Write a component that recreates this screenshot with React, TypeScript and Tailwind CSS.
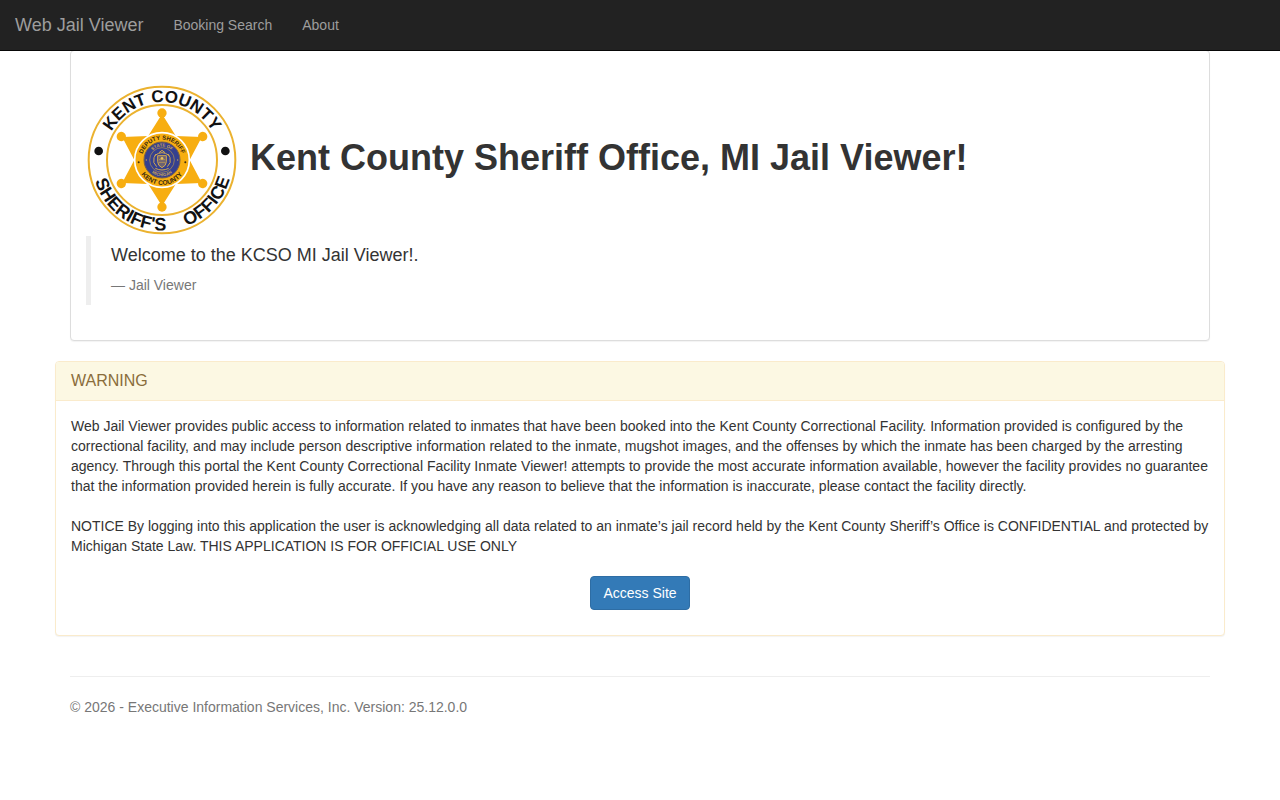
import type { ReactNode } from 'react'

const navLinks = [
  { label: 'Booking Search', href: '#search' },
  { label: 'About', href: '#about' }
]

const starAngles = [0, 60, 120, 180, 240, 300]

function starPoints(outer: number, inner: number) {
  const points: string[] = []
  for (let i = 0; i < 12; i++) {
    const r = i % 2 === 0 ? outer : inner
    const a = (i * Math.PI) / 6
    points.push(`${(225 + r * Math.sin(a)).toFixed(1)},${(225 - r * Math.cos(a)).toFixed(1)}`)
  }
  return points.join(' ')
}

function SheriffSeal() {
  return (
    <svg
      viewBox="0 0 450 450"
      className="w-[150px] h-[150px] shrink-0 font-['Liberation_Sans',Arial,sans-serif]"
      role="img"
      aria-label="Kent County Sheriff's Office"
    >
      <defs>
        <path id="ring-top" d="M51 225 A174 174 0 0 1 399 225" />
        <path id="ring-bottom" d="M14 225 A211 211 0 0 0 436 225" />
        <path id="badge-top" d="M164 225 A61 61 0 0 1 286 225" />
        <path id="badge-bottom" d="M150 225 A75 75 0 0 0 300 225" />
        <path id="state-top" d="M185 225 A40 40 0 0 1 265 225" />
        <path id="state-bottom" d="M176 225 A49 49 0 0 0 274 225" />
      </defs>

      <circle cx="225" cy="225" r="220" fill="#fff" stroke="#ebb22f" strokeWidth="6" />
      <circle cx="225" cy="225" r="165" fill="#fff" stroke="#ebb22f" strokeWidth="6" />

      <g fill="#111" fontWeight="bold" textAnchor="middle">
        <text fontSize="51">
          <textPath href="#ring-top" startOffset="50%">KENT COUNTY</textPath>
        </text>
        <text fontSize="54">
          <textPath href="#ring-bottom" startOffset="204">SHERIFF'S</textPath>
        </text>
        <text fontSize="54">
          <textPath href="#ring-bottom" startOffset="506">OFFICE</textPath>
        </text>
      </g>
      <circle cx="35" cy="198" r="13" fill="#111" />
      <circle cx="415" cy="198" r="13" fill="#111" />

      <polygon points={starPoints(138, 83)} fill="#f7ae11" />
      {starAngles.map(angle => (
        <circle key={angle} cx="225" cy="84" r="14" fill="#f7ae11" transform={`rotate(${angle} 225 225)`} />
      ))}

      <circle cx="225" cy="225" r="82" fill="#f7ae11" stroke="#fff" strokeWidth="5" />
      <g fill="#3a2a10" fontWeight="bold" textAnchor="middle">
        <text fontSize="18">
          <textPath href="#badge-top" startOffset="50%">DEPUTY SHERIFF</textPath>
        </text>
        <text fontSize="20">
          <textPath href="#badge-bottom" startOffset="50%">KENT COUNTY</textPath>
        </text>
      </g>
      <circle cx="155" cy="232" r="3" fill="#3a2a10" />
      <circle cx="295" cy="232" r="3" fill="#3a2a10" />

      <circle cx="225" cy="225" r="54" fill="#35408f" stroke="#7a6248" strokeWidth="3" />
      <circle cx="225" cy="225" r="37" fill="none" stroke="#b8954f" strokeWidth="2" />
      <g fill="#c9a35a" fontWeight="bold" textAnchor="middle" fontSize="13">
        <text>
          <textPath href="#state-top" startOffset="50%">STATE OF</textPath>
        </text>
        <text>
          <textPath href="#state-bottom" startOffset="50%">MICHIGAN</textPath>
        </text>
      </g>
      <circle cx="178" cy="225" r="2" fill="#c9a35a" />
      <circle cx="272" cy="225" r="2" fill="#c9a35a" />

      {/* coat of arms */}
      <g stroke="#d2a850" strokeWidth="3" fill="none">
        <path d="M212 212 H238 V230 Q238 242 225 248 Q212 242 212 230 Z" fill="#6d6272" />
        <path d="M209 245 Q196 234 201 218 L207 207 M241 245 Q254 234 249 218 L243 207" />
        <path d="M203 212 Q225 194 247 212 M216 203 L225 196 L234 203" />
        <path d="M205 250 Q225 260 245 250" />
        <path d="M216 224 H234 M216 232 H234" strokeWidth="2" />
      </g>
      <circle cx="225" cy="220" r="4" fill="#e9c05c" />
    </svg>
  )
}

function WarningPanel({ title, children }: { title: string; children: ReactNode }) {
  return (
    <section className="mb-5 bg-white border border-[#faebcc] rounded shadow-[0_1px_1px_rgba(0,0,0,0.05)]">
      <div className="px-[15px] py-2.5 bg-[#fcf8e3] border-b border-[#faebcc] rounded-t-[3px]">
        <h3 className="text-base leading-[18px] text-[#8a6d3b]">{title}</h3>
      </div>
      <div className="p-[15px]">{children}</div>
    </section>
  )
}

export default function App() {
  return (
    <div className="min-h-screen pt-[50px] bg-white text-sm leading-5 text-[#333] font-['Liberation_Sans',Arial,sans-serif]">
      <header className="fixed inset-x-0 top-0 z-10 bg-[#222] border-b border-[#080808]">
        <nav className="flex items-center text-[#9d9d9d]">
          <a href="#home" className="p-[15px] text-lg leading-5">
            Web Jail Viewer
          </a>
          {navLinks.map(link => (
            <a key={link.label} href={link.href} className="p-[15px] hover:text-white">
              {link.label}
            </a>
          ))}
        </nav>
      </header>

      <div className="max-w-[1170px] mx-auto">
        <main>
          <section className="mx-[15px] mb-5 px-[15px] pt-[34px] pb-[35px] bg-white border border-[#ddd] rounded shadow-[0_1px_1px_rgba(0,0,0,0.05)]">
            <div className="flex items-center gap-[13px] pl-px">
              <SheriffSeal />
              <h1 className="pb-1 text-4xl font-bold">Kent County Sheriff Office, MI Jail Viewer!</h1>
            </div>
            <blockquote className="mt-px pt-1.5 pb-2.5 px-5 border-l-[5px] border-[#eee]">
              <p className="mb-[7px] text-lg leading-[26px]">Welcome to the KCSO MI Jail Viewer!.</p>
              <footer className="text-[#777]">— Jail Viewer</footer>
            </blockquote>
          </section>

          <WarningPanel title="WARNING">
            <p className="mb-5">
              Web Jail Viewer provides public access to information related to inmates that have been booked into the
              Kent County Correctional Facility. Information provided is configured by the correctional facility, and
              may include person descriptive information related to the inmate, mugshot images, and the offenses by
              which the inmate has been charged by the arresting agency. Through this portal the Kent County
              Correctional Facility Inmate Viewer! attempts to provide the most accurate information available, however
              the facility provides no guarantee that the information provided herein is fully accurate. If you have any
              reason to believe that the information is inaccurate, please contact the facility directly.
            </p>
            <p className="mb-5">
              NOTICE By logging into this application the user is acknowledging all data related to an inmate’s jail
              record held by the Kent County Sheriff’s Office is CONFIDENTIAL and protected by Michigan State Law. THIS
              APPLICATION IS FOR OFFICIAL USE ONLY
            </p>
            <div className="mb-2.5 flex justify-center">
              <button
                type="button"
                className="px-3 py-1.5 text-white bg-[#337ab7] border border-[#2e6da4] rounded cursor-pointer hover:bg-[#286090]"
              >
                Access Site
              </button>
            </div>
          </WarningPanel>
        </main>

        <footer className="mx-[15px] mt-10 pt-5 border-t border-[#eee] text-[#777]">
          <p>© 2026 - Executive Information Services, Inc. Version: 25.12.0.0</p>
        </footer>
      </div>
    </div>
  )
}
